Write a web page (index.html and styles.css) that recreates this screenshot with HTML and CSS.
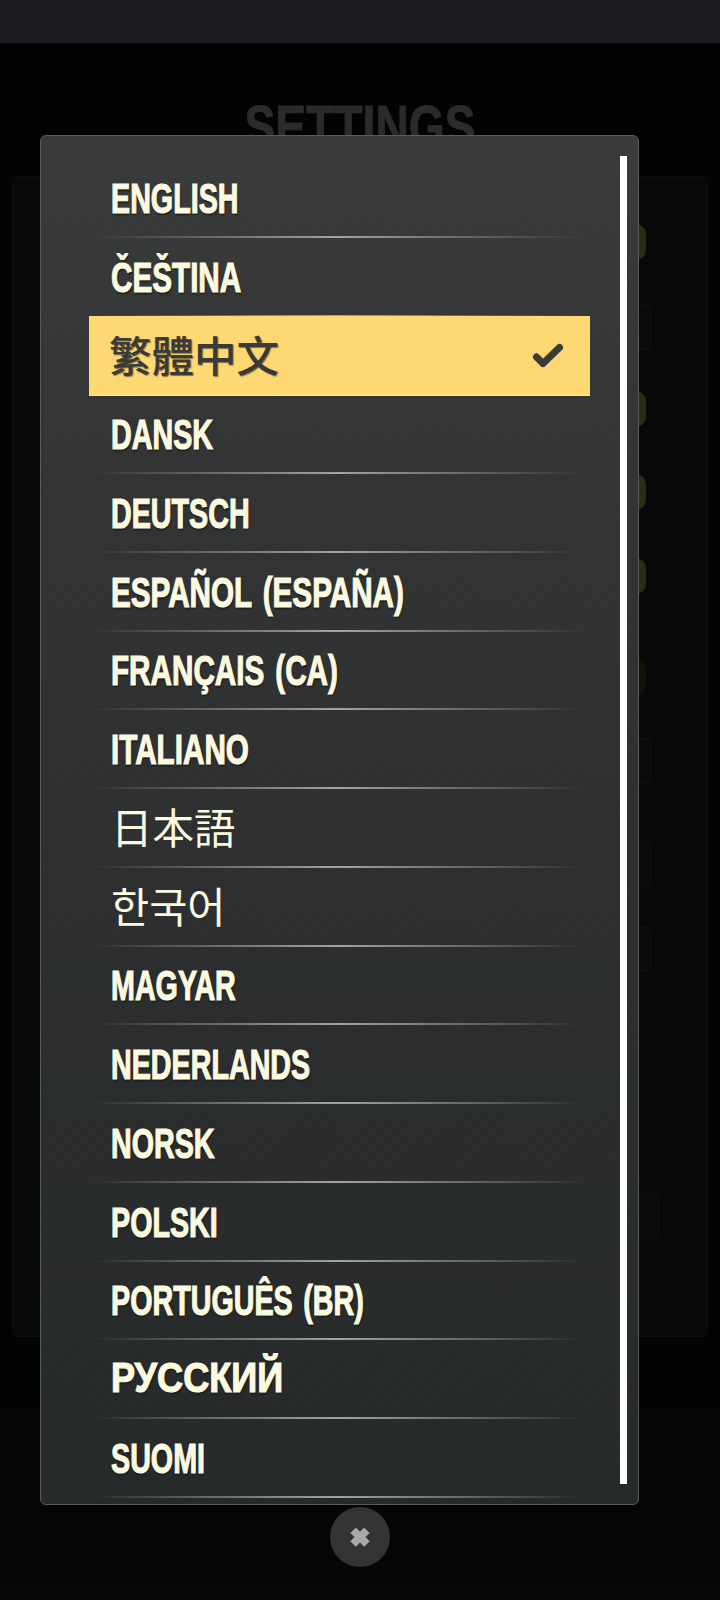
FILE: index.html
```html
<!DOCTYPE html>
<html lang="en">
<head><meta charset="utf-8"><title>Settings</title><link rel="stylesheet" href="styles.css"></head>
<body>
<header class="topbar"></header>
<main class="backdrop">
  <h1 class="title"><span class="title-text">SETTINGS</span></h1>
  <div class="card">
    <span class="pill pill-1"></span><span class="pill pill-2"></span><span class="pill pill-3"></span><span class="pill pill-4"></span><span class="pill pill-5"></span>
    <span class="slot slot-1"></span><span class="slot slot-2"></span><span class="slot slot-3"></span><span class="slot slot-4"></span><span class="slot slot-5"></span>
  </div>
</main>
<section class="panel">
  <div class="scrollbar"></div>
  <ul class="list">
    <li class="row"><span class="label">ENGLISH</span></li>
    <li class="row"><span class="label wide">ČEŠTINA</span></li>
    <li class="row selected"><span class="label cjk">繁體中文</span>
      <svg class="check" viewBox="0 0 32 25"><path d="M4.5 14 L11 20.5 L27.5 4.5" fill="none" stroke="#3a3a38" stroke-width="7" stroke-linecap="round" stroke-linejoin="round"/></svg></li>
    <li class="row"><span class="label">DANSK</span></li>
    <li class="row"><span class="label">DEUTSCH</span></li>
    <li class="row"><span class="label wide">ESPAÑOL (ESPAÑA)</span></li>
    <li class="row"><span class="label wide">FRANÇAIS (CA)</span></li>
    <li class="row"><span class="label wide">ITALIANO</span></li>
    <li class="row"><span class="label thin-jp">日本語</span></li>
    <li class="row"><span class="label thin-kr">한국어</span></li>
    <li class="row"><span class="label">MAGYAR</span></li>
    <li class="row"><span class="label">NEDERLANDS</span></li>
    <li class="row"><span class="label">NORSK</span></li>
    <li class="row"><span class="label">POLSKI</span></li>
    <li class="row"><span class="label">PORTUGUÊS (BR)</span></li>
    <li class="row"><span class="label cyr">РУССКИЙ</span></li>
    <li class="row"><span class="label">SUOMI</span></li>
  </ul>
</section>
<button class="close" aria-label="Close"><svg viewBox="4 4 16 16"><path d="M5 9 L9 5 L12 8 L15 5 L19 9 L16 12 L19 15 L15 19 L12 16 L9 19 L5 15 L8 12 Z" fill="#a8a8a8"/></svg></button>
</body>
</html>
```
FILE: styles.css
```css
* { box-sizing: border-box; }
html, body { margin: 0; padding: 0; }
body { width: 720px; height: 1600px; background: linear-gradient(180deg, #020303 0%, #020303 84%, #070605 100%); position: relative; overflow: hidden; font-family: "Liberation Sans", sans-serif; }
.topbar { height: 43px; background: #1c1d22; }
.backdrop { padding: 54px 12px 0; }
.title { margin: 0; height: 79px; text-align: center; font-size: 60px; line-height: 60px; font-weight: 700; color: #2b2b2b; }
.title-text { display: inline-block; transform: scaleX(0.77); -webkit-text-stroke: 1px #2b2b2b; }
.card { height: 1161px; border: 1px solid #0c0e0d; background: #070908; border-radius: 5px; position: relative; }
.pill { position: absolute; left: 612px; width: 21px; height: 36px; background: #282d14; border-radius: 0 10px 10px 0; }
.pill-1 { top: 47px; } .pill-2 { top: 214px; } .pill-3 { top: 297px; } .pill-4 { top: 381px; }
.pill-5 { top: 482px; background: #12140a; }
.slot { position: absolute; left: 612px; width: 26px; height: 46px; background: #0a0b0b; border: 1px solid #0f1111; border-radius: 0 4px 4px 0; }
.slot-1 { top: 127px; } .slot-2 { top: 561px; } .slot-3 { top: 664px; } .slot-4 { top: 749px; }
.slot-5 { top: 1016px; width: 34px; border-radius: 0; }
.panel { position: absolute; left: 40px; top: 135px; width: 599px; height: 1370px; border: 1px solid #5a5c5c; border-radius: 6px; background: repeating-linear-gradient(135deg, rgba(255,255,255,0.012) 0 1px, rgba(255,255,255,0) 1px 3px), linear-gradient(180deg, #393b3b 0%, #323434 25%, #2b2d2f 60%, #26292a 100%); padding: 24px 0 0 48px; }
.scrollbar { position: absolute; left: 579px; top: 20px; width: 7px; height: 1328px; background: #fff; }
.list { list-style: none; margin: 0; padding: 0; width: 501px; }
.row { height: 78.75px; display: flex; align-items: center; justify-content: space-between; padding: 0 26px 0 22px; position: relative; }
.row::after { content: ""; position: absolute; left: 4px; right: 8px; bottom: 1px; height: 2px; background: linear-gradient(90deg, rgba(150,152,152,0) 0%, #5a5c5c 18%, #a2a4a4 50%, #5a5c5c 82%, rgba(150,152,152,0) 100%); }
.label { font-size: 43px; font-weight: 700; color: #fbfae0; text-shadow: 1px 2px 2px #1a1a1a; display: inline-block; -webkit-text-stroke: 1.2px #fbfae0; word-spacing: 4px; transform: translateY(-1px) scaleX(0.667); transform-origin: left center; }
.wide { transform: translateY(-1px) scaleX(0.69); }
.cjk { font-family: "Noto Sans CJK TC", sans-serif; font-size: 42.5px; font-weight: 500; color: #3a3a36; text-shadow: 1px 1px 1px #80704a; -webkit-text-stroke: 0; transform: translate(-2px, -2px); }
.thin-jp { font-family: "Noto Sans CJK JP", sans-serif; font-weight: 400; font-size: 41.5px; text-shadow: none; -webkit-text-stroke: 0; transform: translateY(-3px); }
.thin-kr { font-family: "Noto Sans CJK KR", sans-serif; font-weight: 400; font-size: 41.5px; text-shadow: none; -webkit-text-stroke: 0; transform: translateY(-3px); }
.cyr { transform: translateY(-3px) scaleX(0.84); }
.selected { background: #fed873; height: 80.75px; margin-top: -2px; border-bottom: 1px solid #ffe9a8; }
.selected::after { display: none; }
.check { width: 32px; height: 25px; }
.close { position: absolute; left: 330px; top: 1507px; width: 60px; height: 60px; border-radius: 50%; border: 0; padding: 19px; background: #333; }
.close svg { display: block; width: 22px; height: 22px; }
```
